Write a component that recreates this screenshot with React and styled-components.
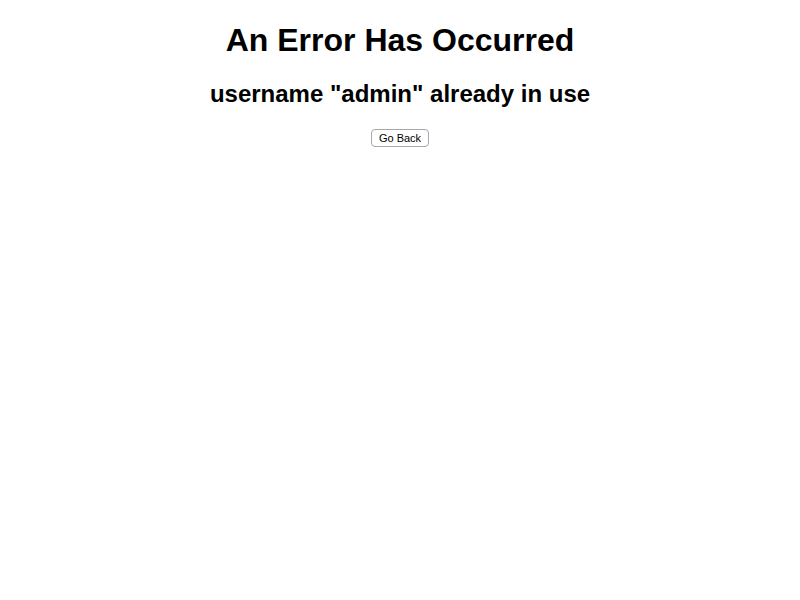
import React from 'react';
import styled, { createGlobalStyle } from 'styled-components';

const GlobalStyle = createGlobalStyle`
  body {
    margin: 0;
    background: #fff;
    font-family: "Liberation Sans", Arial, sans-serif;
  }
`;

const Wrapper = styled.div`
  text-align: center;
  color: #000;
  padding: 0 8px;
`;
const Title = styled.h1`
  font-size: 32px;
  font-weight: 700;
  margin: 22px 0 21px;
`;
const Message = styled.h2`
  font-size: 24px;
  font-weight: 700;
  margin: 20px 0;
`;
const Actions = styled.div`
  display: flex;
  justify-content: center;
  padding-top: 1px;
`;
const Button = styled.button`
  font-family: "Liberation Sans", Arial, sans-serif;
  font-size: 11px;
  height: 18px;
  padding: 0 7px;
  background: #fff;
  color: #000;
  border: 1px solid #a8a8a8;
  border-radius: 4px;
  cursor: pointer;
`;

const App = () => (
  <>
    <GlobalStyle />
    <Wrapper>
      <Title>An Error Has Occurred</Title>
      <Message>username "admin" already in use</Message>
      <Actions>
        <Button type="button">Go Back</Button>
      </Actions>
    </Wrapper>
  </>
);

export default App;
